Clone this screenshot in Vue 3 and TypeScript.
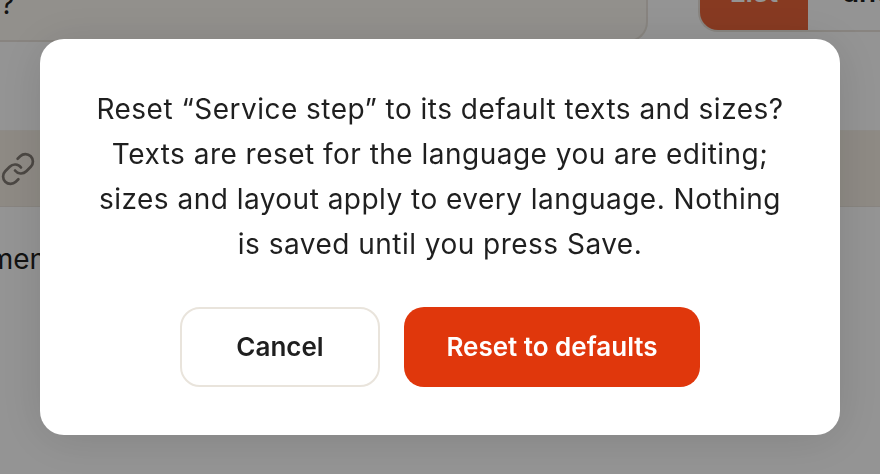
<script setup lang="ts">
const message = 'Reset “Service step” to its default texts and sizes? Texts are reset for the language you are editing; sizes and layout apply to every language. Nothing is saved until you press Save.'
</script>

<template>
  <div class="page">
    <div class="top">
      <div class="question"><span class="q">?</span></div>
      <div class="segments">
        <div class="seg active"><span class="seg-label">List</span></div>
        <div class="seg plain"><span class="seg-label">and</span></div>
      </div>
    </div>
    <div class="band">
      <svg class="link" width="36" height="36" viewBox="0 0 24 24" fill="none" stroke="currentColor" stroke-width="1.8" stroke-linecap="round" stroke-linejoin="round">
        <path d="M10 13a5 5 0 0 0 7.54.54l3-3a5 5 0 0 0-7.07-7.07l-1.72 1.71" />
        <path d="M14 11a5 5 0 0 0-7.54-.54l-3 3a5 5 0 0 0 7.07 7.07l1.71-1.71" />
      </svg>
    </div>
    <div class="after">Comments</div>

    <div class="overlay">
      <div class="dialog">
        <p class="msg">{{ message }}</p>
        <div class="actions">
          <button class="btn cancel">Cancel</button>
          <button class="btn confirm">Reset to defaults</button>
        </div>
      </div>
    </div>
  </div>
</template>

<style>
html, body { margin: 0; background: #fff; }
</style>

<style scoped>
.page {
  width: 880px;
  height: 474px;
  overflow: hidden;
  background: #fff;
  font-family: Inter, "Liberation Sans", sans-serif;
  color: #1f1f1f;
}
.top {
  display: flex;
  height: 131px;
  border-bottom: 1px solid #f5f0e8;
  box-sizing: border-box;
}
.question {
  width: 668px;
  height: 42px;
  margin-left: -20px;
  margin-right: 50px;
  flex: none;
  box-sizing: border-box;
  background: #fbf8f2;
  border: 2px solid #eae4dc;
  border-top: 0;
  border-radius: 0 0 20px 20px;
  font-size: 28px;
  line-height: 28px;
  padding-left: 18px;
}
.q { display: block; margin-top: -10px; }
.segments { display: flex; height: 32px; flex: none; }
.seg {
  box-sizing: border-box;
  font-size: 28px;
  font-weight: 600;
  border-bottom: 2px solid #eae4dc;
  overflow: hidden;
}
.seg-label { display: block; line-height: 28px; margin-top: -22px; }
.seg.active {
  width: 110px;
  background: #e8643a;
  color: #fff;
  border-left: 2px solid #eae4dc;
  border-radius: 0 0 0 20px;
  text-align: center;
}
.seg.plain {
  width: 120px;
  padding-left: 35px;
  white-space: nowrap;
}
.band {
  height: 76px;
  background: #f5eee4;
  border-bottom: 1px solid #eae4dc;
  display: flex;
  align-items: center;
  box-sizing: border-box;
  color: #827b74;
}
.after {
  margin-top: 32px;
  margin-left: -73px;
  font-size: 28px;
  line-height: 40px;
}
.overlay {
  position: fixed;
  inset: 0;
  background: rgba(0, 0, 0, 0.42);
  display: flex;
  align-items: center;
  justify-content: center;
}
.dialog {
  width: 800px;
  box-sizing: border-box;
  padding: 48px;
  background: #fff;
  border-radius: 24px;
  box-shadow: 0 4px 48px rgba(0, 0, 0, 0.12);
}
.msg {
  margin: 0;
  text-align: center;
  font-size: 28px;
  letter-spacing: 0.48px;
  line-height: 44.8px;
  color: #1f1f1f;
}
.actions {
  display: flex;
  justify-content: center;
  gap: 24px;
  margin-top: 40px;
}
.btn {
  height: 80px;
  box-sizing: border-box;
  border-radius: 20px;
  font-family: inherit;
  font-size: 26px;
  font-weight: 600;
}
.cancel {
  width: 200px;
  background: #fff;
  border: 2px solid #e9e4dc;
  color: #1f1f1f;
}
.confirm {
  width: 296px;
  background: #e0370c;
  border: 0;
  color: #fff;
}
</style>
